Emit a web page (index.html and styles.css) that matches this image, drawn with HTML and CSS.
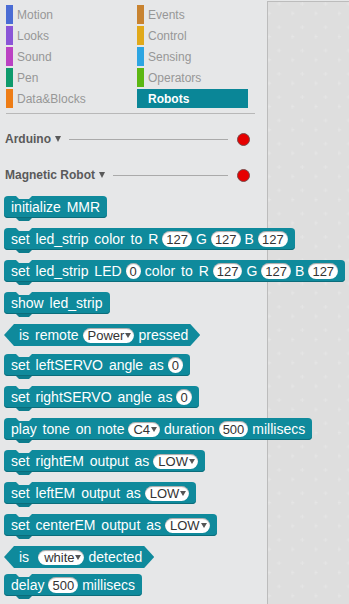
FILE: index.html
```html
<!DOCTYPE html>
<html lang="en">
<head>
    <meta charset="UTF-8">
    <meta name="viewport" content="width=device-width, initial-scale=1.0">
    <title>Robots Blocks</title>
    <link rel="stylesheet" href="styles.css">
</head>
<body>
    <div class="app">
        <div class="palette">
            <!-- Block categories -->
            <div class="categories">
                <div class="cat"><span class="bar motion"></span>Motion</div>
                <div class="cat"><span class="bar events"></span>Events</div>
                <div class="cat"><span class="bar looks"></span>Looks</div>
                <div class="cat"><span class="bar control"></span>Control</div>
                <div class="cat"><span class="bar sound"></span>Sound</div>
                <div class="cat"><span class="bar sensing"></span>Sensing</div>
                <div class="cat"><span class="bar pen"></span>Pen</div>
                <div class="cat"><span class="bar operators"></span>Operators</div>
                <div class="cat"><span class="bar data"></span>Data&amp;Blocks</div>
                <div class="cat selected"><span class="bar robots"></span>Robots</div>
            </div>

            <div class="divider"></div>

            <div class="ext-header first">
                <span class="ext-name">Arduino</span><span class="caret"></span>
                <span class="rule"></span><span class="status"></span>
            </div>
            <div class="ext-header">
                <span class="ext-name">Magnetic Robot</span><span class="caret"></span>
                <span class="rule"></span><span class="status"></span>
            </div>

            <!-- Robot blocks -->
            <div class="blocks">
                <div class="block">initialize MMR</div>
                <div class="block">set led_strip color to R<span class="num">127</span>G<span class="num">127</span>B<span class="num">127</span></div>
                <div class="block">set led_strip LED<span class="num">0</span>color to R<span class="num">127</span>G<span class="num">127</span>B<span class="num">127</span></div>
                <div class="block">show led_strip</div>
                <div class="block bool">is remote<span class="menu">Power</span>pressed</div>
                <div class="block">set leftSERVO angle as<span class="num">0</span></div>
                <div class="block">set rightSERVO angle as<span class="num">0</span></div>
                <div class="block">play tone on note<span class="menu">C4</span>duration<span class="num">500</span>millisecs</div>
                <div class="block">set rightEM output as<span class="menu">LOW</span></div>
                <div class="block">set leftEM output as<span class="menu">LOW</span></div>
                <div class="block">set centerEM output as<span class="menu">LOW</span></div>
                <div class="block bool last-bool">is<span class="menu wide">white</span>detected</div>
                <div class="block">delay<span class="num">500</span>millisecs</div>
            </div>
        </div>

        <div class="canvas">
            <svg class="grid" width="100%" height="100%">
                <defs>
                    <pattern id="plus" width="23.3" height="23.3" patternUnits="userSpaceOnUse">
                        <path d="M9 2h4M11 0v4M-1 11.3h4M1 9.3v4" stroke="#e5e5e5" stroke-width="1" fill="none"/>
                    </pattern>
                </defs>
                <rect width="100%" height="100%" fill="url(#plus)"/>
            </svg>
        </div>
    </div>
</body>
</html>
```

FILE: styles.css
```css
body {
    margin: 0;
    font-family: "Liberation Sans", Arial, sans-serif;
    background-color: #e6e7e8;
}
.app {
    display: flex;
    height: 604px;
    overflow: hidden;
}
.palette {
    width: 267px;
    flex-shrink: 0;
    background-color: #e6e7e8;
    position: relative;
    z-index: 1;
}
.categories {
    display: grid;
    grid-template-columns: 131px 111px;
    row-gap: 2px;
    padding: 5px 0 0 6px;
}
.cat {
    display: flex;
    align-items: center;
    height: 19px;
    font-size: 12px;
    color: #979797;
}
.bar {
    width: 7px;
    height: 19px;
    margin-right: 4px;
}
.motion { background-color: #4a6cd4; }
.looks { background-color: #8a55d7; }
.sound { background-color: #bb42c3; }
.pen { background-color: #0e9a6c; }
.data { background-color: #ee7d16; }
.events { background-color: #c88330; }
.control { background-color: #e1a91a; }
.sensing { background-color: #2ca5e2; }
.operators { background-color: #5cb712; }
.robots { background-color: #0a8697; }
.cat.selected {
    background-color: #0a8697;
    color: #fff;
    font-weight: bold;
}
.divider {
    height: 1px;
    background-color: #b8b8b8;
    margin: 5px 12px 0 6px;
}
.ext-header {
    display: flex;
    align-items: center;
    height: 20px;
    padding: 0 17px 0 5px;
    margin-top: 16px;
    font-size: 12px;
    font-weight: bold;
    color: #5a5a5a;
}
.ext-header.first {
    margin-top: 15px;
}
.caret {
    width: 0;
    height: 0;
    margin-left: 4px;
    border-left: 3.5px solid transparent;
    border-right: 3.5px solid transparent;
    border-top: 6px solid #5a5a5a;
}
.rule {
    flex: 1;
    height: 1px;
    background-color: #aaa;
    margin: 0 9px 0 8px;
}
.status {
    width: 11px;
    height: 11px;
    border-radius: 50%;
    background-color: #e60000;
    border: 1px solid #7a4a4a;
}
.blocks {
    display: flex;
    flex-direction: column;
    align-items: flex-start;
    padding: 11px 0 0 4px;
}
.block {
    position: relative;
    display: flex;
    align-items: center;
    gap: 4px;
    height: 22px;
    padding: 0 7px 0 7px;
    margin-bottom: 10px;
    background-color: #0f8a9c;
    border-radius: 4px;
    box-shadow: inset 0 -1px 0 #0b6d7b;
    color: #fff;
    font-size: 14px;
    word-spacing: 2px;
    white-space: nowrap;
}
/* top notch and bottom bump of stack blocks */
.block::before,
.block::after {
    content: "";
    position: absolute;
    left: 12px;
    width: 16px;
    height: 3px;
    clip-path: polygon(0 0, 100% 0, calc(100% - 3px) 100%, 3px 100%);
}
.block::before {
    top: 0;
    background-color: #e6e7e8;
}
.block::after {
    top: 100%;
    background-color: #0d7d8d;
}
.block.bool {
    padding: 0 12px 0 15px;
    border-radius: 0;
    box-shadow: none;
    margin-bottom: 8px;
    clip-path: polygon(10px 0, calc(100% - 10px) 0, 100% 50%, calc(100% - 10px) 100%, 10px 100%, 0 50%);
}
.block.bool::before,
.block.bool::after {
    display: none;
}
.block.last-bool {
    margin-bottom: 6px;
}
.num,
.menu {
    display: inline-flex;
    align-items: center;
    height: 16px;
    padding: 0 4px;
    border-radius: 8px;
    background-color: #fff;
    color: #333;
    font-size: 13px;
    word-spacing: 0;
    box-shadow: inset 0 1px 1px rgba(0, 0, 0, 0.35);
}
.menu {
    height: 15px;
    padding: 0 3px 0 5px;
}
.menu::after {
    content: "";
    margin-left: 1px;
    border-left: 3.5px solid transparent;
    border-right: 3.5px solid transparent;
    border-top: 5px solid #555;
}
.menu.wide {
    margin-left: 5px;
    padding-left: 6px;
}
.canvas {
    flex: 1;
    margin-top: 1px;
    border-top: 1px solid #bcbcbc;
    border-left: 1px solid #bcbcbc;
    background-color: #dedede;
}
.grid {
    display: block;
}
```
